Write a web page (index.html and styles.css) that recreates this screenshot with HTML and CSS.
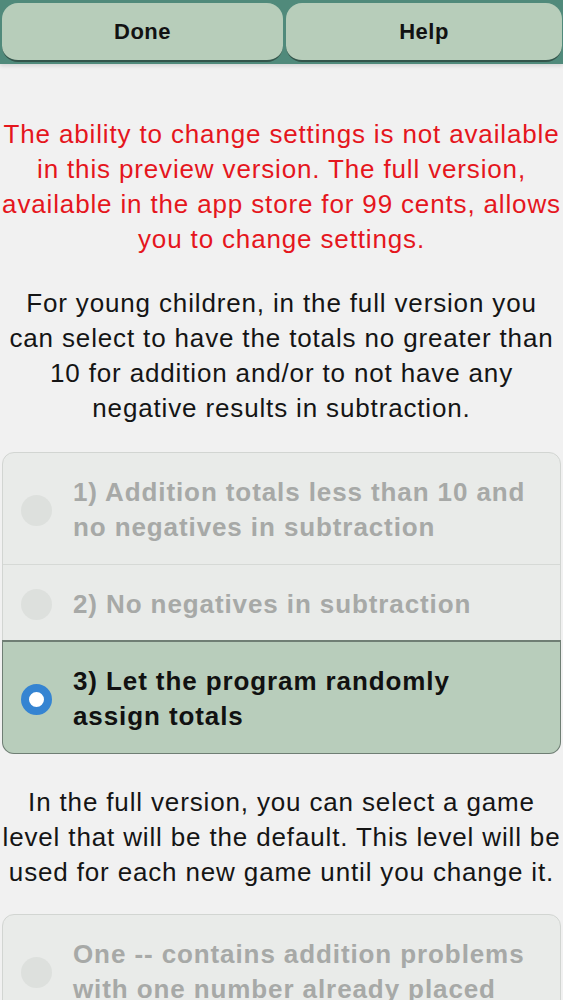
FILE: index.html
```html
<!DOCTYPE html>
<html lang="en">
<head>
<meta charset="utf-8">
<title>Settings</title>
<link rel="stylesheet" href="styles.css">
</head>
<body>
<header class="topbar">
  <div class="tb-btn tb-done">Done</div>
  <div class="tb-btn tb-help">Help</div>
</header>
<main class="content">
  <p class="note note-red">The ability to change settings is not available<br>in this preview version. The full version,<br>available in the app store for 99 cents, allows<br>you to change settings.</p>
  <p class="note note-black">For young children, in the full version you<br>can select to have the totals no greater than<br>10 for addition and/or to not have any<br>negative results in subtraction.</p>
  <div class="group group-one">
    <div class="opt opt-first">
      <span class="radio"></span>
      <span class="opt-label">1) Addition totals less than 10 and<br>no negatives in subtraction</span>
    </div>
    <div class="opt">
      <span class="radio"></span>
      <span class="opt-label">2) No negatives in subtraction</span>
    </div>
    <div class="opt opt-last opt-selected">
      <span class="radio radio-on"></span>
      <span class="opt-label">3) Let the program randomly<br>assign totals</span>
    </div>
  </div>
  <p class="note note-black note-second">In the full version, you can select a game<br>level that will be the default. This level will be<br>used for each new game until you change it.</p>
  <div class="group group-two">
    <div class="opt opt-first">
      <span class="radio"></span>
      <span class="opt-label">One -- contains addition problems<br>with one number already placed</span>
    </div>
    <div class="opt opt-last">
      <span class="radio"></span>
      <span class="opt-label">Two -- contains addition problems<br>with no numbers placed</span>
    </div>
  </div>
</main>
</body>
</html>
```

FILE: styles.css
```css
html, body {
  margin: 0;
  padding: 0;
}
body {
  background: #f1f1f1;
  font-family: "Liberation Sans", Arial, sans-serif;
  color: #141414;
  overflow: hidden;
}
.topbar {
  height: 64px;
  box-sizing: border-box;
  background: #508a7b;
  display: flex;
  gap: 3px;
  padding: 3px 1px 2px 2px;
  box-shadow: 0 2px 4px rgba(0, 0, 0, 0.12);
}
.tb-btn {
  background: #b7cdba;
  border-radius: 16px;
  border-bottom: 2px solid #33554b;
  box-sizing: border-box;
  display: flex;
  align-items: center;
  justify-content: center;
  font-weight: bold;
  font-size: 22px;
  letter-spacing: 0.5px;
  color: #121212;
}
.tb-done {
  width: 281px;
}
.tb-help {
  flex: 1;
}
.content {
  padding: 0 2px;
}
.note {
  margin: 0;
  font-size: 26px;
  letter-spacing: 0.85px;
  line-height: 35px;
  text-align: center;
  white-space: nowrap;
}
.note-red {
  color: #e5161d;
  margin-top: 53px;
}
.note-black {
  margin-top: 29px;
  color: #151515;
}
.note-second {
  margin-top: 31px;
}
.group {
  border: 1px solid #d2d5d2;
  border-radius: 12px;
  background: #e9ebe9;
}
.group-one {
  margin-top: 26px;
}
.group-two {
  margin-top: 24px;
}
.opt {
  display: flex;
  align-items: center;
  gap: 21px;
  padding: 22px 8px 19px 18px;
  border-top: 1px solid #d6d9d6;
}
.opt-first {
  border-top: none;
  border-radius: 11px 11px 0 0;
}
.opt-last {
  border-radius: 0 0 11px 11px;
}
.opt-label {
  font-weight: bold;
  font-size: 26px;
  letter-spacing: 0.9px;
  line-height: 35px;
  color: #a7a9a7;
  white-space: nowrap;
}
.radio {
  width: 31px;
  height: 31px;
  border-radius: 50%;
  background: #dde0dd;
  flex: none;
  box-sizing: border-box;
}
.opt-selected {
  background: #b8cdbb;
  border-top: 1px solid #6f7e74;
  box-shadow: 0 0 0 1px #6f7e74;
}
.opt-selected .opt-label {
  color: #111;
}
.radio-on {
  background: #fff;
  border: 8px solid #3584d2;
}
```
